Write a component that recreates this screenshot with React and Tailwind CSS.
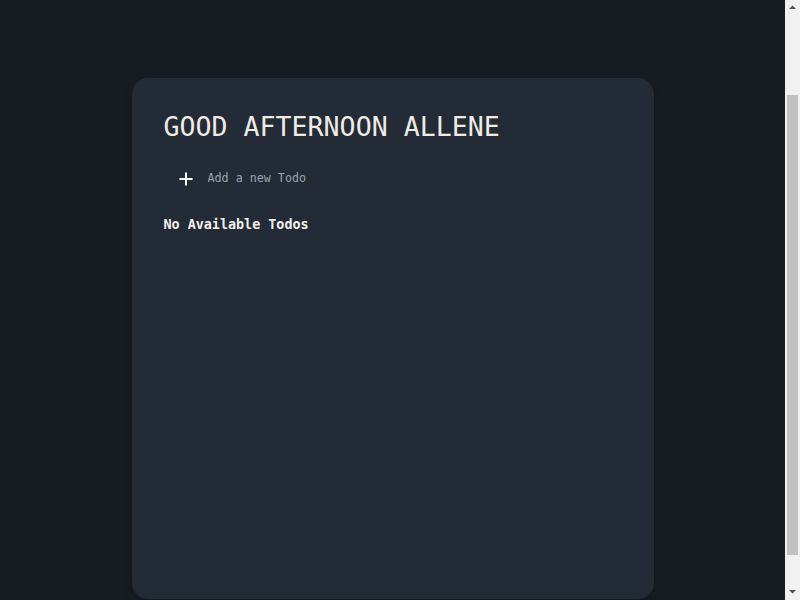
import React from 'react';
import { Plus } from 'lucide-react';

const Scrollbar = () => (
    <div className="w-[15px] h-screen shrink-0 bg-[#f1f1f1] flex flex-col items-center">
        <svg width="15" height="15" viewBox="0 0 15 15" className="shrink-0">
            <path d="M4 9 L7.5 5.5 L11 9 Z" fill="#505050" />
        </svg>
        <div className="h-[80px] shrink-0" />
        <div className="w-[11px] h-[460px] shrink-0 bg-[#c1c1c1]" />
        <div className="flex-1" />
        <svg width="15" height="15" viewBox="0 0 15 15" className="shrink-0">
            <path d="M4 5 L11 5 L7.5 8.5 Z" fill="#505050" />
        </svg>
    </div>
);

export default function App() {
    return (
        <div className="h-screen overflow-hidden flex bg-[#171c23] font-['DejaVu_Sans_Mono',monospace]">
            <main className="flex-1 pt-[78px]">
                <div className="mx-auto w-[522px] h-[521px] bg-[#222b36] rounded-2xl shadow-lg p-8">
                    <h1 className="text-[26.6px] leading-[34px] text-[#efebe2]">GOOD AFTERNOON ALLENE</h1>
                    <div className="mt-[19px] flex items-center gap-3 px-3 h-8">
                        <button className="text-white">
                            <Plus size={20} strokeWidth={2.4} />
                        </button>
                        <input
                            type="text"
                            placeholder="Add a new Todo"
                            className="flex-1 bg-transparent outline-none text-[11.7px] text-[#e5e7eb] placeholder:text-[#9aa3ad]"
                        />
                    </div>
                    <p className="mt-[20px] text-[13.4px] font-bold text-[#f3f1ec]">No Available Todos</p>
                </div>
            </main>
            <Scrollbar />
        </div>
    );
}
